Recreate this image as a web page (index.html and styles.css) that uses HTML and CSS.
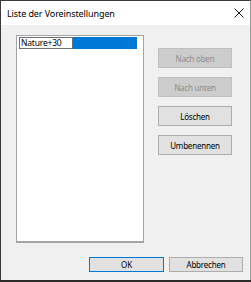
FILE: index.html
```html
<!DOCTYPE html>
<html>
<head>
<meta charset="utf-8">
<link rel="stylesheet" href="styles.css">
</head>
<body>
<div class="window">
  <div class="titlebar">
    <span class="title">Liste der Voreinstellungen</span>
    <svg class="close" width="10" height="10" viewBox="0 0 10 10"><path d="M0.5 0.5 L9.5 9.5 M9.5 0.5 L0.5 9.5" stroke="#1a1a1a" stroke-width="1" fill="none"/></svg>
  </div>
  <div class="content">
    <div class="main">
      <div class="listbox">
        <div class="item">
          <span class="edit">Nature+30</span>
          <span class="sel"></span>
        </div>
      </div>
      <div class="buttons">
        <div class="btn disabled">Nach oben</div>
        <div class="btn disabled">Nach unten</div>
        <div class="btn">Löschen</div>
        <div class="btn">Umbenennen</div>
      </div>
    </div>
    <div class="footer">
      <div class="btn small default">OK</div>
      <div class="btn small">Abbrechen</div>
    </div>
  </div>
</div>
</body>
</html>
```
FILE: styles.css
```css
html, body {
  margin: 0;
  padding: 0;
}
body {
  width: 251px;
  height: 282px;
  background: #2e2b2a;
  font-family: "Noto Sans", "Open Sans", sans-serif;
  overflow: hidden;
}
.window {
  box-sizing: border-box;
  width: 251px;
  height: 280px;
  border-top: 1px solid #3a3a3a;
  border-left: 1px solid #3a3a3a;
  border-right: 1px solid #9a9a9a;
  background: #f0f0f0;
  display: flex;
  flex-direction: column;
}
.titlebar {
  height: 24px;
  background: #ffffff;
  display: flex;
  align-items: center;
  justify-content: space-between;
  padding-left: 6px;
  padding-right: 6px;
}
.title {
  font-size: 9px;
  color: #000;
  letter-spacing: -0.1px;
  margin-top: 0px;
}
.close {
  display: block;
}
.content {
  flex: 1;
  display: flex;
  flex-direction: column;
  padding-top: 10px;
}
.main {
  display: flex;
  padding-left: 15px;
}
.listbox {
  box-sizing: border-box;
  width: 128px;
  height: 208px;
  background: #fff;
  border: 1px solid #a3a3a8;
  border-bottom-width: 2px;
  padding: 1px 6px 0 2px;
}
.item {
  display: flex;
  height: 12px;
}
.edit {
  box-sizing: border-box;
  width: 54px;
  height: 12px;
  border: 1px solid #6e6e6e;
  font-size: 8.5px;
  line-height: 10px;
  padding-left: 1px;
  color: #000;
  background: #fff;
  letter-spacing: -0.2px;
}
.sel {
  flex: 1;
  background: #0078d7;
}
.buttons {
  display: flex;
  flex-direction: column;
  gap: 9px;
  margin-left: 14px;
  margin-top: 13px;
}
.btn {
  box-sizing: border-box;
  width: 74px;
  height: 20px;
  background: #e1e1e1;
  border: 1px solid #adadad;
  font-size: 8px;
  color: #000;
  display: flex;
  align-items: center;
  justify-content: center;
  letter-spacing: -0.2px;
}
.btn.disabled {
  background: #cccccc;
  border-color: #bfbfbf;
  color: #8c8c8c;
}
.footer {
  display: flex;
  justify-content: flex-end;
  gap: 5px;
  padding-right: 7px;
  margin-top: 14px;
}
.btn.small {
  height: 15px;
}
.btn.default {
  width: 75px;
  border-color: #0078d7;
}
```
